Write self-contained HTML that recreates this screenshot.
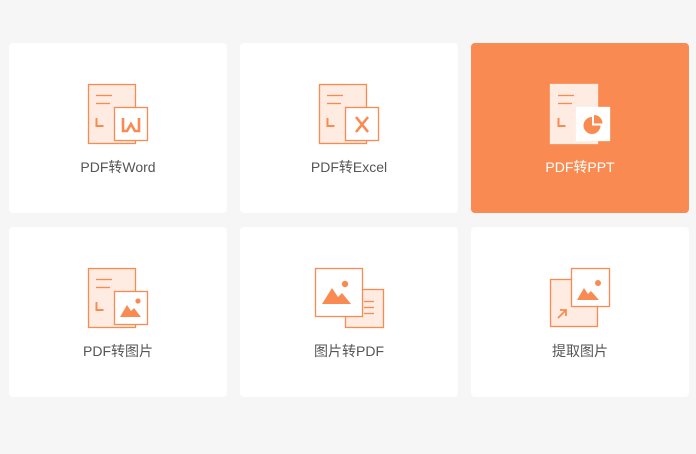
<!DOCTYPE html>
<html><head><meta charset="utf-8"><style>
body{margin:0;width:696px;height:454px;background:#f6f6f6;position:relative;font-family:"Liberation Sans","Noto Sans CJK SC",sans-serif;overflow:hidden}
.c{position:absolute;width:218px;height:170px;background:#fff;border-radius:4px}
.c svg{position:absolute;left:0;top:0}
.t{position:absolute;left:0;right:0;top:114px;text-align:center;font-size:14px;color:#555}
.o{background:#f98b52}.o .t{color:#fff}
</style></head><body>
<div class="c" style="left:9px;top:43px">
<svg width="218" height="170"><g stroke="#f98b52" stroke-width="1.3" fill="none">
<rect x="79.5" y="41.5" width="47" height="59" fill="#feebe2"/>
<line x1="87" y1="52.5" x2="103" y2="52.5"/><line x1="87" y1="60.5" x2="101" y2="60.5"/>
<path d="M87.5 75v8h7" stroke-width="2"/>
<rect x="105.5" y="64.5" width="33" height="33" fill="#fff"/>
<path d="M114 75v13h4l4-7 4 7h4V75" stroke-width="2.6"/></g></svg>
<div class="t">PDF转Word</div></div>
<div class="c" style="left:240px;top:43px">
<svg width="218" height="170"><g stroke="#f98b52" stroke-width="1.3" fill="none">
<rect x="79.5" y="41.5" width="47" height="59" fill="#feebe2"/>
<line x1="87" y1="52.5" x2="103" y2="52.5"/><line x1="87" y1="60.5" x2="101" y2="60.5"/>
<path d="M87.5 75v8h7" stroke-width="2"/>
<rect x="105.5" y="64.5" width="33" height="33" fill="#fff"/>
<path d="M116 74l12 15M128 74l-12 15" stroke-width="2.6"/></g></svg>
<div class="t">PDF转Excel</div></div>
<div class="c o" style="left:471px;top:43px">
<svg width="218" height="170"><g stroke="#f98b52" stroke-width="1.3" fill="none">
<rect x="79.5" y="41.5" width="47" height="59" fill="#feebe2" stroke="#feebe2"/>
<line x1="87" y1="52.5" x2="103" y2="52.5"/><line x1="87" y1="60.5" x2="101" y2="60.5"/>
<path d="M87.5 75v8h7" stroke-width="2"/>
<rect x="105.5" y="64.5" width="33" height="33" fill="#fff" stroke="#fff"/>
<path d="M121 74a8.5 8.5 0 1 0 8.5 8.5h-8.5z" fill="#f98b52" stroke="none"/>
<path d="M123 72v8.5h8.5a8.5 8.5 0 0 0-8.5-8.5z" fill="#f98b52" stroke="none"/></g></svg>
<div class="t">PDF转PPT</div></div>
<div class="c" style="left:9px;top:227px">
<svg width="218" height="170"><g stroke="#f98b52" stroke-width="1.3" fill="none">
<rect x="79.5" y="41.5" width="47" height="59" fill="#feebe2"/>
<line x1="87" y1="52.5" x2="103" y2="52.5"/><line x1="87" y1="60.5" x2="101" y2="60.5"/>
<path d="M87.5 75v8h7" stroke-width="2"/>
<rect x="105.5" y="64.5" width="33" height="33" fill="#fff"/>
<path d="M111 90l7-12 4 6 3-3 7 9z" fill="#f98b52" stroke="none"/><circle cx="129" cy="74" r="2.6" fill="#f98b52" stroke="none"/></g></svg>
<div class="t">PDF转图片</div></div>
<div class="c" style="left:240px;top:227px">
<svg width="218" height="170"><g stroke="#f98b52" stroke-width="1.3" fill="none">
<rect x="105.5" y="62.5" width="38" height="38" fill="#feebe2"/>
<line x1="124" y1="74.5" x2="134" y2="74.5"/><line x1="124" y1="80.5" x2="134" y2="80.5"/><line x1="124" y1="86.5" x2="134" y2="86.5"/>
<rect x="75.5" y="41.5" width="47" height="48" fill="#fff"/>
<path d="M82 77l10-16 6 9 4-4 9 11z" fill="#f98b52" stroke="none"/><circle cx="105" cy="57" r="3.2" fill="#f98b52" stroke="none"/></g></svg>
<div class="t">图片转PDF</div></div>
<div class="c" style="left:471px;top:227px">
<svg width="218" height="170"><g stroke="#f98b52" stroke-width="1.3" fill="none">
<rect x="79.5" y="52.5" width="47" height="47" fill="#feebe2"/>
<path d="M87 91l8-8M89 83h6v6" stroke-width="1.8"/>
<rect x="100.5" y="41.5" width="38" height="38" fill="#fff"/>
<path d="M106 73l7-12 4 6 3-3 8 9z" fill="#f98b52" stroke="none"/><circle cx="127" cy="56" r="3" fill="#f98b52" stroke="none"/></g></svg>
<div class="t">提取图片</div></div>
</body></html>
